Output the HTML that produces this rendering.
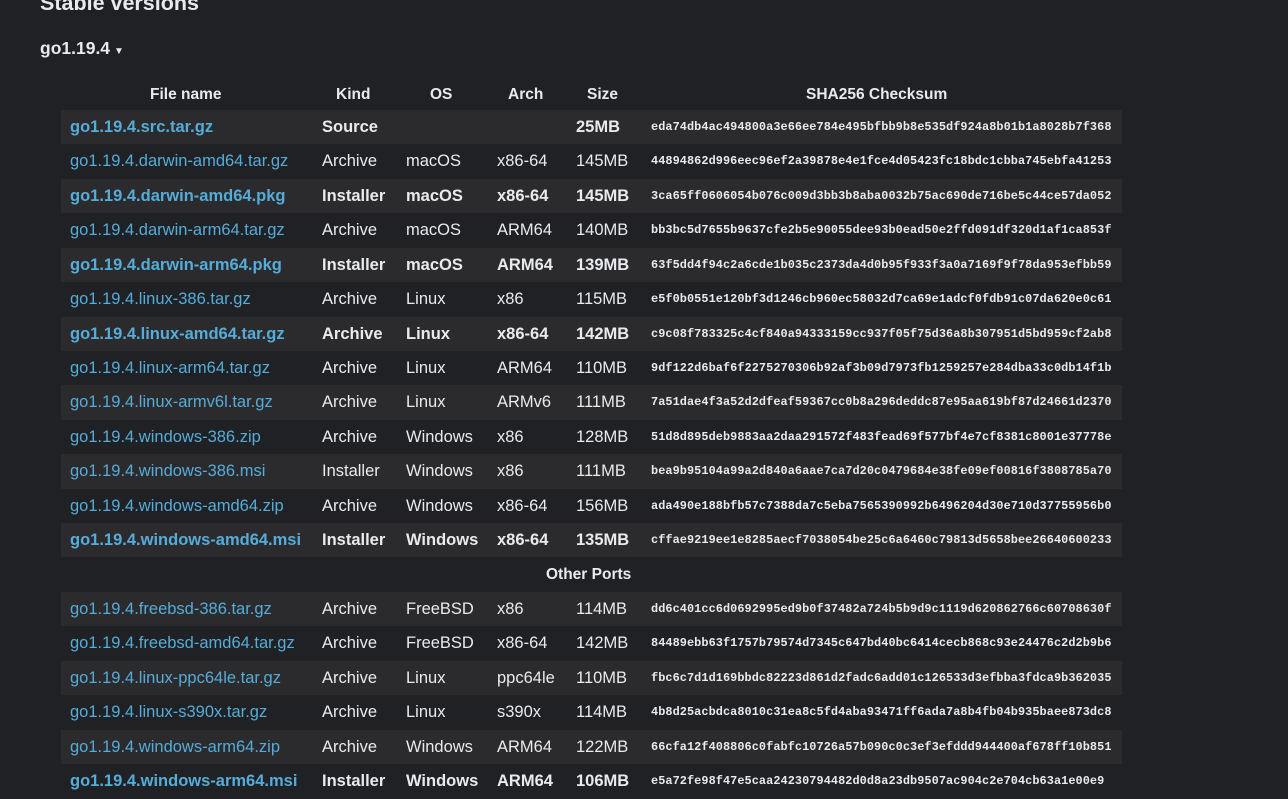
<!DOCTYPE html><html><head><meta charset="utf-8"><style>
body{margin:0;background:#202124;color:#e8eaed;font-family:"Liberation Sans",sans-serif;width:1288px;height:793px;overflow:hidden;position:relative}
h2{position:absolute;left:40px;top:-9px;margin:0;font-size:21.5px;font-weight:bold}
.v{position:absolute;left:40px;top:38px;font-size:17.5px;font-weight:bold}
.v span{font-size:10px;margin-left:4px}
.r{position:absolute;left:61px;width:1061px;height:34.4px;font-size:16.5px;line-height:35px;white-space:nowrap}
.r.s{background:#2b2b2d}
.r div{position:absolute;top:0}
.a{left:9px;color:#55acd8}.k{left:261px}.o{left:345px}.c{left:436px}.z{left:515px}
.h{left:590px;font-family:"Liberation Mono",monospace;font-size:11.9px;font-weight:bold;letter-spacing:0.06px}
.b{font-weight:bold}
.hd{font-weight:bold;font-size:15.5px}
</style></head><body>
<h2>Stable versions</h2>
<div class="v">go1.19.4<span>▼</span></div>
<div class="r hd" style="top:77px"><div style="left:89px">File name</div><div style="left:275px">Kind</div><div style="left:369px">OS</div><div style="left:447px">Arch</div><div style="left:526px">Size</div><div style="left:745px">SHA256 Checksum</div></div>
<div id="rows"></div>
<script>
var d=[
[1,"go1.19.4.src.tar.gz","Source","","","25MB","eda74db4ac494800a3e66ee784e495bfbb9b8e535df924a8b01b1a8028b7f368"],
[0,"go1.19.4.darwin-amd64.tar.gz","Archive","macOS","x86-64","145MB","44894862d996eec96ef2a39878e4e1fce4d05423fc18bdc1cbba745ebfa41253"],
[1,"go1.19.4.darwin-amd64.pkg","Installer","macOS","x86-64","145MB","3ca65ff0606054b076c009d3bb3b8aba0032b75ac690de716be5c44ce57da052"],
[0,"go1.19.4.darwin-arm64.tar.gz","Archive","macOS","ARM64","140MB","bb3bc5d7655b9637cfe2b5e90055dee93b0ead50e2ffd091df320d1af1ca853f"],
[1,"go1.19.4.darwin-arm64.pkg","Installer","macOS","ARM64","139MB","63f5dd4f94c2a6cde1b035c2373da4d0b95f933f3a0a7169f9f78da953efbb59"],
[0,"go1.19.4.linux-386.tar.gz","Archive","Linux","x86","115MB","e5f0b0551e120bf3d1246cb960ec58032d7ca69e1adcf0fdb91c07da620e0c61"],
[1,"go1.19.4.linux-amd64.tar.gz","Archive","Linux","x86-64","142MB","c9c08f783325c4cf840a94333159cc937f05f75d36a8b307951d5bd959cf2ab8"],
[0,"go1.19.4.linux-arm64.tar.gz","Archive","Linux","ARM64","110MB","9df122d6baf6f2275270306b92af3b09d7973fb1259257e284dba33c0db14f1b"],
[0,"go1.19.4.linux-armv6l.tar.gz","Archive","Linux","ARMv6","111MB","7a51dae4f3a52d2dfeaf59367cc0b8a296deddc87e95aa619bf87d24661d2370"],
[0,"go1.19.4.windows-386.zip","Archive","Windows","x86","128MB","51d8d895deb9883aa2daa291572f483fead69f577bf4e7cf8381c8001e37778e"],
[0,"go1.19.4.windows-386.msi","Installer","Windows","x86","111MB","bea9b95104a99a2d840a6aae7ca7d20c0479684e38fe09ef00816f3808785a70"],
[0,"go1.19.4.windows-amd64.zip","Archive","Windows","x86-64","156MB","ada490e188bfb57c7388da7c5eba7565390992b6496204d30e710d37755956b0"],
[1,"go1.19.4.windows-amd64.msi","Installer","Windows","x86-64","135MB","cffae9219ee1e8285aecf7038054be25c6a6460c79813d5658bee26640600233"],
null,
[0,"go1.19.4.freebsd-386.tar.gz","Archive","FreeBSD","x86","114MB","dd6c401cc6d0692995ed9b0f37482a724b5b9d9c1119d620862766c60708630f"],
[0,"go1.19.4.freebsd-amd64.tar.gz","Archive","FreeBSD","x86-64","142MB","84489ebb63f1757b79574d7345c647bd40bc6414cecb868c93e24476c2d2b9b6"],
[0,"go1.19.4.linux-ppc64le.tar.gz","Archive","Linux","ppc64le","110MB","fbc6c7d1d169bbdc82223d861d2fadc6add01c126533d3efbba3fdca9b362035"],
[0,"go1.19.4.linux-s390x.tar.gz","Archive","Linux","s390x","114MB","4b8d25acbdca8010c31ea8c5fd4aba93471ff6ada7a8b4fb04b935baee873dc8"],
[0,"go1.19.4.windows-arm64.zip","Archive","Windows","ARM64","122MB","66cfa12f408806c0fabfc10726a57b090c0c3ef3efddd944400af678ff10b851"],
[1,"go1.19.4.windows-arm64.msi","Installer","Windows","ARM64","106MB","e5a72fe98f47e5caa24230794482d0d8a23db9507ac904c2e704cb63a1e00e9"]];
var h="";
d.forEach(function(r,i){var t=110+i*34.42;
if(!r){h+='<div class="r hd" style="top:'+t+'px"><div style="left:485px">Other Ports</div></div>';return;}
var j=i<13?i:i-14;var s=j%2==0?' s':'';var b=r[0]?' b':'';
h+='<div class="r'+s+'" style="top:'+t+'px"><div class="a'+b+'">'+r[1]+'</div><div class="k'+b+'">'+r[2]+'</div><div class="o'+b+'">'+r[3]+'</div><div class="c'+b+'">'+r[4]+'</div><div class="z'+b+'">'+r[5]+'</div><div class="h">'+r[6]+'</div></div>';});
document.getElementById("rows").innerHTML=h;
</script>
</body></html>
